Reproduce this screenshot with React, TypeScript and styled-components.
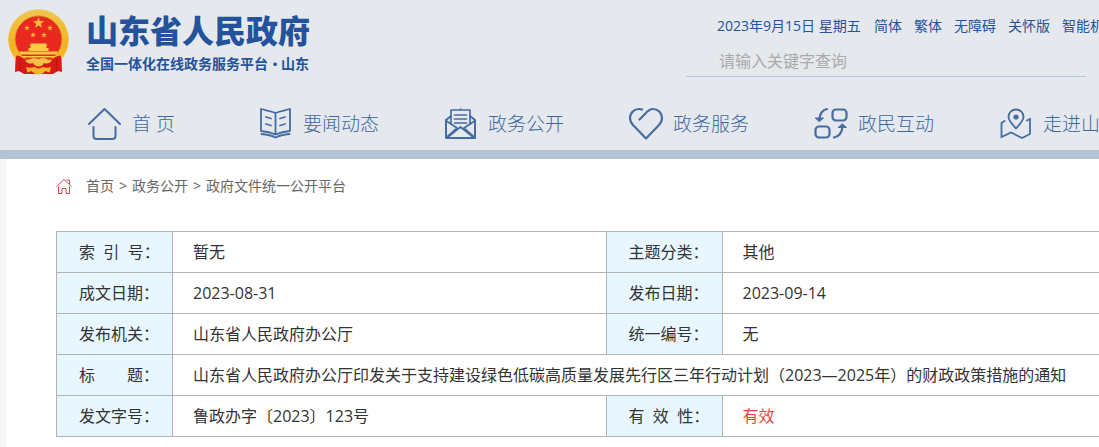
import React from "react";
import styled, { createGlobalStyle } from "styled-components";

const GlobalStyle = createGlobalStyle`
  * { box-sizing: border-box; }
  body {
    margin: 0;
    background: #f5f5f5;
    color: #333;
    font-family: "Open Sans", "Noto Sans CJK SC", sans-serif;
    font-size: 16px;
  }
  a { color: inherit; text-decoration: none; }
`;

const Page = styled.div`
  min-height: 100vh;
  overflow: hidden;
`;

const Header = styled.header`
  min-width: 1206px;
  background: #e5e8ed;
  border-bottom: 9px solid #b4c4d6;
`;

const HeaderTop = styled.div`
  display: flex;
  justify-content: space-between;
  padding: 9px 0 8px 8px;
`;

const Brand = styled.a`
  display: flex;
  gap: 16px;
  color: #24539b;
`;

const BrandText = styled.div`
  font-family: "Noto Sans CJK SC", sans-serif;
  white-space: nowrap;
`;

const BrandName = styled.h1`
  margin: 0 0 4px;
  font-size: 32px;
  line-height: 40px;
  font-weight: 900;
`;

const BrandSlogan = styled.p`
  margin: 0;
  font-size: 14px;
  line-height: 20px;
  font-weight: 700;
`;

const Dot = styled.span`
  display: inline-block;
  width: 13px;
  text-align: center;
`;

const Tools = styled.div`
  width: 520px;
  white-space: nowrap;
`;

const ToolLinks = styled.div`
  display: flex;
  gap: 12px;
  padding-left: 31px;
  color: #24539b;
  font-size: 14px;
  line-height: 34px;
`;

const Today = styled.span`
  min-width: 145px;
`;

const SearchForm = styled.form`
  width: 400px;
  border-bottom: 1px solid #b3c6da;
`;

const SearchInput = styled.input`
  display: block;
  width: 100%;
  height: 33px;
  padding: 2px 33px 0;
  border: 0;
  outline: 0;
  background: transparent;
  color: #333;
  font: inherit;
  &::placeholder { color: #aaa; opacity: 1; }
`;

const Nav = styled.nav`
  display: flex;
  gap: 65px;
  height: 52px;
  margin-top: 13px;
  padding-left: 88px;
`;

const NavItem = styled.a`
  display: flex;
  align-items: center;
  gap: 9px;
  min-width: 106px;
  color: #3f68a0;
  font-size: 19px;
  font-weight: 300;
  line-height: 28px;
  white-space: nowrap;
`;

const NavIcon = styled.svg`
  flex: none;
  width: 35px;
  height: 34px;
  fill: none;
  stroke: #456da2;
  stroke-width: 2;
  stroke-linecap: round;
  stroke-linejoin: round;
`;

const Main = styled.main`
  min-width: 1200px;
  margin-left: 6px;
  min-height: calc(100vh - 159px);
  padding: 14px 50px 10px;
  background: #fff;
`;

const Crumbs = styled.nav`
  display: flex;
  align-items: center;
  gap: 5px;
  margin-bottom: 32px;
  color: #666;
  font-size: 14px;
  line-height: 26px;
`;

const HomeIcon = styled.svg`
  width: 16px;
  height: 16px;
  margin-right: 9px;
  fill: none;
  stroke: #cc4b45;
`;

const InfoTable = styled.table`
  width: 100%;
  border-collapse: collapse;
  table-layout: fixed;
  line-height: 24px;
  white-space: nowrap;
`;

const LabelCol = styled.col`
  width: 116px;
`;

const Label = styled.th`
  height: 41px;
  padding: 0 0 0 22px;
  border: 1px solid #b3b3b3;
  background: #e8f6ff;
  font-weight: 400;
  text-align: left;
`;

const Value = styled.td<{ $accent?: boolean }>`
  padding: 0 0 0 20px;
  border: 1px solid #b3b3b3;
  color: ${(p) => (p.$accent ? "#dc4a43" : "#333")};
`;

const star = (cx: number, cy: number, r: number) =>
  Array.from({ length: 10 }, (_, i) => {
    const a = (Math.PI * i) / 5 - Math.PI / 2;
    const d = i % 2 ? r * 0.4 : r;
    return `${(cx + d * Math.cos(a)).toFixed(2)},${(cy + d * Math.sin(a)).toFixed(2)}`;
  }).join(" ");

const Emblem = () => (
  <svg width="62" height="66" viewBox="0 0 62 66" aria-hidden="true">
    <defs>
      <linearGradient id="gold" x1="0" y1="0" x2="0" y2="1">
        <stop offset="0" stopColor="#f3ca55" />
        <stop offset="0.6" stopColor="#f3b522" />
        <stop offset="1" stopColor="#fbc42b" />
      </linearGradient>
    </defs>
    <circle cx="30.5" cy="30.5" r="30.3" fill="url(#gold)" />
    <circle cx="30.5" cy="30.5" r="27" fill="none" stroke="#dba02d" strokeWidth="4" strokeDasharray="1 2.2" opacity="0.3" />
    <circle cx="30.5" cy="30.3" r="23.5" fill="#e92920" stroke="#d99a1e" />
    <g fill="#f6bc3c">
      <polygon points={star(30.5, 14, 6)} />
      <polygon points={star(19, 19, 3)} />
      <polygon points={star(42, 19, 3)} />
      <polygon points={star(25, 26, 3)} />
      <polygon points={star(36, 26, 3)} />
      <path d="M23 34.500h15l1.500 2h-18zM22.500 36.500h16v2.500h2V42h-20v-3h2z" fill="#fbc944" />
      <path d="M11 42.500h39l-1.500 3h-36zM14 47h33l-1 1.500H15z" fill="#fbc944" />
    </g>
    <path d="M8.500 46.500c4 0 7 3.500 12 5 4 1.200 16 1.200 20 0 5-1.500 8-5 12-5l1 4 .5 12.500-4-1-5 3H16l-5-3-4 1 .5-12.500z" fill="#d91b17" />
    <path d="M12 50c1 5-1 9 1 13M49 50c-1 5 1 9-1 13" stroke="#b91214" fill="none" />
    <path d="M17 51c4 1 6-2 9-2 2 0 3 1 4.500 1s2.500-1 4.500-1c3 0 5 3 9 2-1 3-5 4.500-8 3-1 2-3 3.500-5.500 3.500S26 56 25 54c-3 1.500-7 0-8-3z" fill="#f6c047" />
    <path d="M18 58c4 2 6-.5 9 0 1 1 2.500 1.500 3.500 1.500S33 59 34 58c3-.5 5 2 9 0l-1.500 5.500-4-1.500c-2 2-4.500 3.500-7 3.500s-5-1.500-7-3.500l-4 1.500z" fill="#f6b32e" />
  </svg>
);

const NAV = [
  {
    text: "首 页",
    icon: (
      <>
        <path d="M1 17 16.500 2 32 17" />
        <path d="M5.500 20v9q0 3 3 3h16q3 0 3-3v-9" />
      </>
    ),
  },
  {
    text: "要闻动态",
    icon: (
      <g transform="translate(1 0)" strokeWidth="1.8">
        <path d="M15.500 6C11 4 6.500 3.500 1 2v22c5.500.5 10 1.500 14.500 3.500C20 25.500 24.500 24.500 30 24V2C24.500 3.500 20 4 15.500 6zM15.500 6v21" />
        <path d="M1.500 27c5 .5 10 1.500 14 3.500 4-2 9-3 14-3.500M6 10l5 1.500M6 17l5 1.500M20 11.500l5-1.500M20 18.500l5-1.500" />
      </g>
    ),
  },
  {
    text: "政务公开",
    icon: (
      <g transform="translate(1 0)">
        <path d="M6 17V3h19v14M9.500 8h12M9.500 12h12M9.500 16h12M15.500 2v1" strokeWidth="1.700" />
        <path d="M6 9 1 13v18h29V13l-5-4" />
        <path d="M1.500 14 12 21 2 30M29.500 14 19 21l10 9M3 30l12.500-10L28 30" strokeWidth="1.700" />
      </g>
    ),
  },
  {
    text: "政务服务",
    icon: (
      <path
        strokeWidth="2.200"
        d="M10.500 12.500 16 7C18.500 4 21 2 24 2c5 0 9 4 9 9 0 3-1 5-3 7L17 31.500 4 18c-2-2-3-4-3-7 0-5 4-9 9-9 1 0 2 .2 3 .6"
      />
    ),
  },
  {
    text: "政民互动",
    icon: (
      <g strokeWidth="2.200">
        <rect x="18.500" y="2.500" width="14" height="11" rx="3.500" />
        <rect x="1.500" y="19.500" width="14" height="11" rx="3.500" />
        <path d="M13 2C8.500 3 6 6 5.500 12M20 30.500c5-1 8-5 8.500-11" />
        <path d="M1.500 11h8l-4 3.500zM24.500 20.500h8L28.500 17z" fill="#456da2" strokeWidth="1" />
      </g>
    ),
  },
  {
    text: "走进山东",
    icon: (
      <g transform="translate(1 0)" strokeWidth="1.800">
        <path d="M16 21.500C12 17 8.500 13.500 8.500 10a7.500 7.500 0 0 1 15 0c0 3.500-3.500 7-7.500 11.500z" />
        <circle cx="16" cy="10" r="1.700" fill="#456da2" />
        <path d="M4.500 14 1.500 16v14l9.500-4.500 11 5.500 8-4V12l-3 1.500" strokeLinejoin="miter" />
      </g>
    ),
  },
];

const TOOLS = ["简体", "繁体", "无障碍", "关怀版", "智能机器人"];

export default function App() {
  return (
    <Page>
      <GlobalStyle />
      <Header>
        <HeaderTop>
          <Brand href="#">
            <Emblem />
            <BrandText>
              <BrandName>山东省人民政府</BrandName>
              <BrandSlogan>
                全国一体化在线政务服务平台<Dot>·</Dot>山东
              </BrandSlogan>
            </BrandText>
          </Brand>
          <Tools>
            <ToolLinks>
              <Today>2023年9月15日 星期五</Today>
              {TOOLS.map((t) => (
                <a href="#" key={t}>{t}</a>
              ))}
            </ToolLinks>
            <SearchForm role="search">
              <SearchInput type="text" aria-label="搜索" placeholder="请输入关键字查询" />
            </SearchForm>
          </Tools>
        </HeaderTop>
        <Nav>
          {NAV.map((n) => (
            <NavItem href="#" key={n.text}>
              <NavIcon viewBox="0 0 35 34" aria-hidden="true">{n.icon}</NavIcon>
              {n.text}
            </NavItem>
          ))}
        </Nav>
      </Header>
      <Main>
        <Crumbs>
          <HomeIcon viewBox="0 0 16 16" aria-hidden="true">
            <path d="M.5 8.500 8 1.500l7.500 7M10.500 2h3v4.500M2.500 8.500v7h3.500v-5h4v5h3.500v-7" />
          </HomeIcon>
          <a href="#">首页</a>
          <span>&gt;</span>
          <a href="#">政务公开</a>
          <span>&gt;</span>
          <a href="#">政府文件统一公开平台</a>
        </Crumbs>
        <InfoTable>
          <colgroup>
            <LabelCol />
            <col />
            <LabelCol />
            <col />
          </colgroup>
          <tbody>
            <tr>
              <Label scope="row">索&nbsp;&nbsp;引&nbsp;&nbsp;号：</Label>
              <Value>暂无</Value>
              <Label scope="row">主题分类：</Label>
              <Value>其他</Value>
            </tr>
            <tr>
              <Label scope="row">成文日期：</Label>
              <Value>2023-08-31</Value>
              <Label scope="row">发布日期：</Label>
              <Value>2023-09-14</Value>
            </tr>
            <tr>
              <Label scope="row">发布机关：</Label>
              <Value>山东省人民政府办公厅</Value>
              <Label scope="row">统一编号：</Label>
              <Value>无</Value>
            </tr>
            <tr>
              <Label scope="row">标&emsp;&emsp;题：</Label>
              <Value colSpan={3}>
                山东省人民政府办公厅印发关于支持建设绿色低碳高质量发展先行区三年行动计划（2023—2025年）的财政政策措施的通知
              </Value>
            </tr>
            <tr>
              <Label scope="row">发文字号：</Label>
              <Value>鲁政办字〔2023〕123号</Value>
              <Label scope="row">有&nbsp;&nbsp;效&nbsp;&nbsp;性：</Label>
              <Value $accent>有效</Value>
            </tr>
          </tbody>
        </InfoTable>
      </Main>
    </Page>
  );
}
